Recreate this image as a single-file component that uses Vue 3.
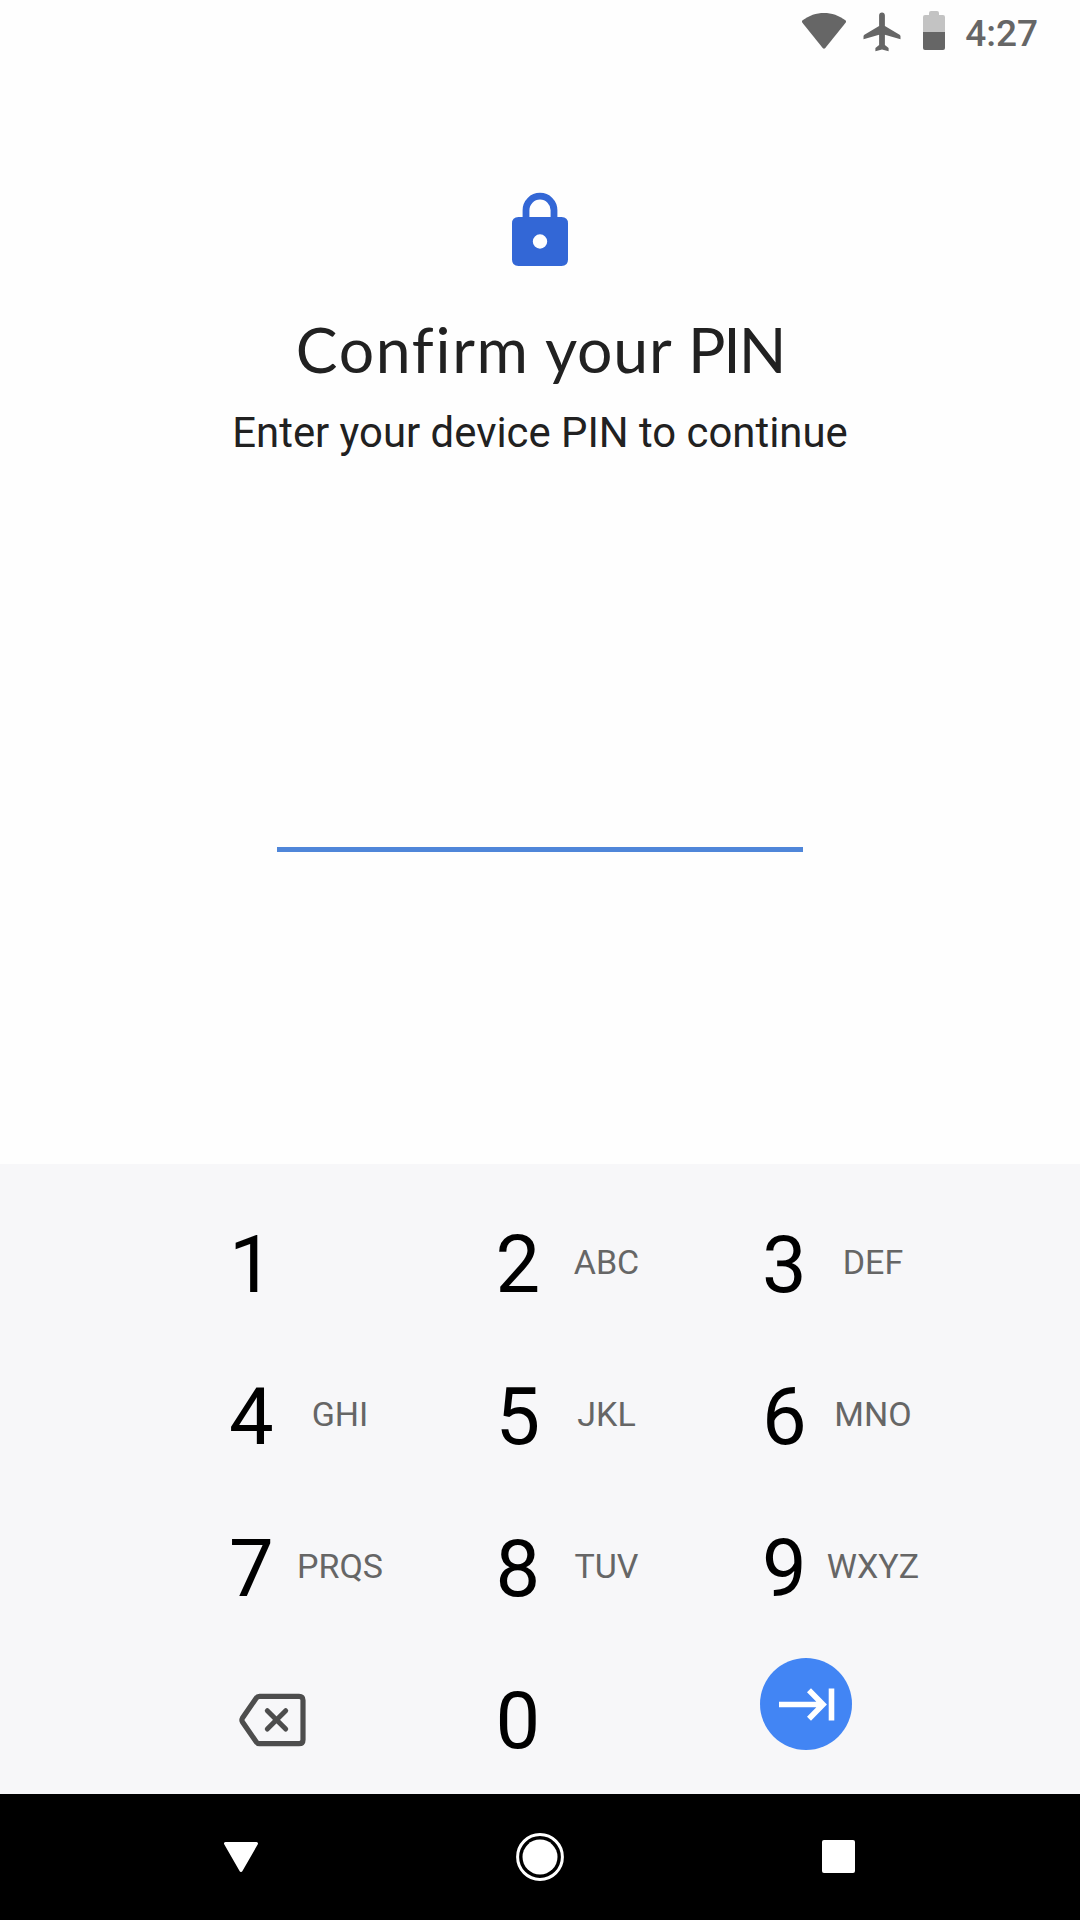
<script setup>
const keys = [
  { digit: '1', letters: '' },
  { digit: '2', letters: 'ABC' },
  { digit: '3', letters: 'DEF' },
  { digit: '4', letters: 'GHI' },
  { digit: '5', letters: 'JKL' },
  { digit: '6', letters: 'MNO' },
  { digit: '7', letters: 'PRQS' },
  { digit: '8', letters: 'TUV' },
  { digit: '9', letters: 'WXYZ' },
]
</script>

<template>
  <div class="screen">
    <header class="status">
      <svg class="wifi" width="46" height="38" viewBox="0 0 46 38">
        <path d="M1.6 8.3C14-1.600 32-1.600 44.400 8.300Q45.600 9.400 44.600 10.700L24.300 36Q23 37.300 21.700 36L1.400 10.700Q.400 9.400 1.600 8.300Z" fill="#666" />
      </svg>
      <svg class="plane" width="38" height="40" viewBox="0 0 38 40">
        <path d="M19 0.500C20.700 .500 21.900 1.800 21.900 3.500V14L36.600 22.800Q37.500 23.500 37.500 24.500V27.300L21.900 22.700V33L25.600 36V39.300L19 37.500L12.400 39.300V36L16.100 33V22.700L.500 27.300V24.500Q.500 23.500 1.400 22.800L16.100 14V3.500C16.100 1.800 17.300 .500 19 .500Z" fill="#666" />
      </svg>
      <svg class="battery" width="22" height="40" viewBox="0 0 22 40">
        <path d="M0 22V7Q0 5 2 5H6V3Q6 1 8 1H14Q16 1 16 3V5H20Q22 5 22 7V22Z" fill="#c3c3c3" />
        <path d="M0 22H22V38Q22 40 20 40H2Q0 40 0 38Z" fill="#666" />
      </svg>
      <span class="clock">4:27</span>
    </header>

    <main class="content">
      <svg class="lock" width="56" height="75" viewBox="0 0 56 75">
        <path d="M14 27V18.200A14 14 0 0 1 42 18.200V27" fill="none" stroke="#3367d6" stroke-width="6.800" />
        <path fill-rule="evenodd" d="M6.500 25H49.500Q56 25 56 31.500V67.500Q56 74 49.500 74H6.500Q0 74 0 67.500V31.500Q0 25 6.500 25ZM28 42.300A7.200 7.200 0 1 0 28 56.700A7.200 7.200 0 1 0 28 42.300Z" fill="#3367d6" />
      </svg>
      <h1 class="title"><span class="confirm">Confirm</span> your <span class="pin">PIN</span></h1>
      <p class="subtitle">Enter your device PIN to continue</p>
      <div class="field"></div>
    </main>

    <section class="keypad">
      <div v-for="key in keys" :key="key.digit" class="key">
        <span class="digit">{{ key.digit }}</span>
        <span class="letters">{{ key.letters }}</span>
      </div>
      <div class="key">
        <svg class="backspace" width="68" height="54" viewBox="0 0 68 54">
          <path d="M20.500 3.300H60Q64 3.300 64 7.300V46.700Q64 50.700 60 50.700H20.500Q18.500 50.700 17.300 49L3.500 29Q2.300 27 3.500 25L17.300 5Q18.500 3.300 20.500 3.300Z" fill="none" stroke="#4d4d4d" stroke-width="5.200" />
          <path d="M28.300 17.700L46.700 36.100M46.700 17.700L28.300 36.100" stroke="#4d4d4d" stroke-width="5" stroke-linecap="round" />
        </svg>
      </div>
      <div class="key">
        <span class="digit">0</span>
      </div>
      <div class="key">
        <svg class="enter" width="92" height="92" viewBox="0 0 92 92">
          <circle cx="46" cy="46" r="46" fill="#4285f4" />
          <path d="M19 46.500H62M49 32.300L63 46.500L49 60.700M71.500 30.500V62.500" fill="none" stroke="#fff" stroke-width="5.600" />
        </svg>
      </div>
    </section>

    <nav class="navbar">
      <svg class="back" width="36" height="32" viewBox="0 0 36 32">
        <path d="M2.500 2.500H33.500L18 29.500Z" fill="#fff" stroke="#fff" stroke-width="3" stroke-linejoin="round" />
      </svg>
      <svg class="home" width="48" height="48" viewBox="0 0 48 48">
        <circle cx="24" cy="24" r="22.400" fill="none" stroke="#fff" stroke-width="3" />
        <circle cx="24" cy="24" r="17.500" fill="#fff" />
      </svg>
      <span class="recent"></span>
    </nav>
  </div>
</template>

<style>
body {
  margin: 0;
  background: #fff;
}
</style>

<style scoped>
.screen {
  width: 1080px;
  height: 1920px;
  display: flex;
  flex-direction: column;
  background: #fefefe;
  font-family: Roboto, sans-serif;
  overflow: hidden;
}
svg {
  display: block;
  flex: none;
}
.status {
  height: 66px;
  flex: none;
  box-sizing: border-box;
  display: flex;
  justify-content: flex-end;
  align-items: flex-start;
  padding-right: 42px;
}
.wifi {
  margin: 12px 16px 0 0;
}
.plane {
  margin: 12px 22px 0 0;
}
.battery {
  margin: 10px 20px 0 0;
}
.clock {
  font-size: 37px;
  font-weight: 500;
  line-height: 68px;
  color: #666;
}
.content {
  flex: 1;
  display: flex;
  flex-direction: column;
  align-items: center;
  padding-top: 126px;
}
.title {
  margin: 42px 0 0;
  font-family: Lato, sans-serif;
  font-weight: 400;
  font-size: 62.500px;
  line-height: 80px;
  letter-spacing: 0.800px;
  font-variant-ligatures: none;
  color: #212121;
  white-space: nowrap;
}
.confirm {
  letter-spacing: 1.700px;
}
.pin {
  letter-spacing: -2.200px;
}
.subtitle {
  margin: 19px 0 0;
  font-size: 41.850px;
  line-height: 50px;
  color: #212121;
  white-space: nowrap;
}
.field {
  width: 526px;
  height: 5px;
  margin-top: 389px;
  background: #4f86d9;
}
.keypad {
  height: 630px;
  flex: none;
  box-sizing: border-box;
  display: grid;
  grid-template-columns: repeat(3, 266.500px);
  grid-auto-rows: 152px;
  padding: 25px 0 0 229px;
  background: #f7f7f9;
}
.key {
  display: flex;
  align-items: center;
}
.digit {
  width: 45px;
  font-size: 79.500px;
  line-height: 152px;
  color: #000;
}
.letters {
  width: 132px;
  margin-top: -7px;
  text-align: center;
  font-size: 34px;
  line-height: 40px;
  color: #666;
}
.backspace {
  margin: -2px 0 0 10px;
}
.enter {
  margin: -35px 0 0 -2px;
}
.navbar {
  height: 126px;
  flex: none;
  box-sizing: border-box;
  display: flex;
  justify-content: space-between;
  align-items: center;
  padding: 0 225px 0 223px;
  background: #000;
}
.home {
  margin: 0 2px 1px 0;
}
.recent {
  width: 33px;
  height: 33px;
  margin-bottom: 1px;
  border-radius: 2px;
  background: #fff;
}
</style>
